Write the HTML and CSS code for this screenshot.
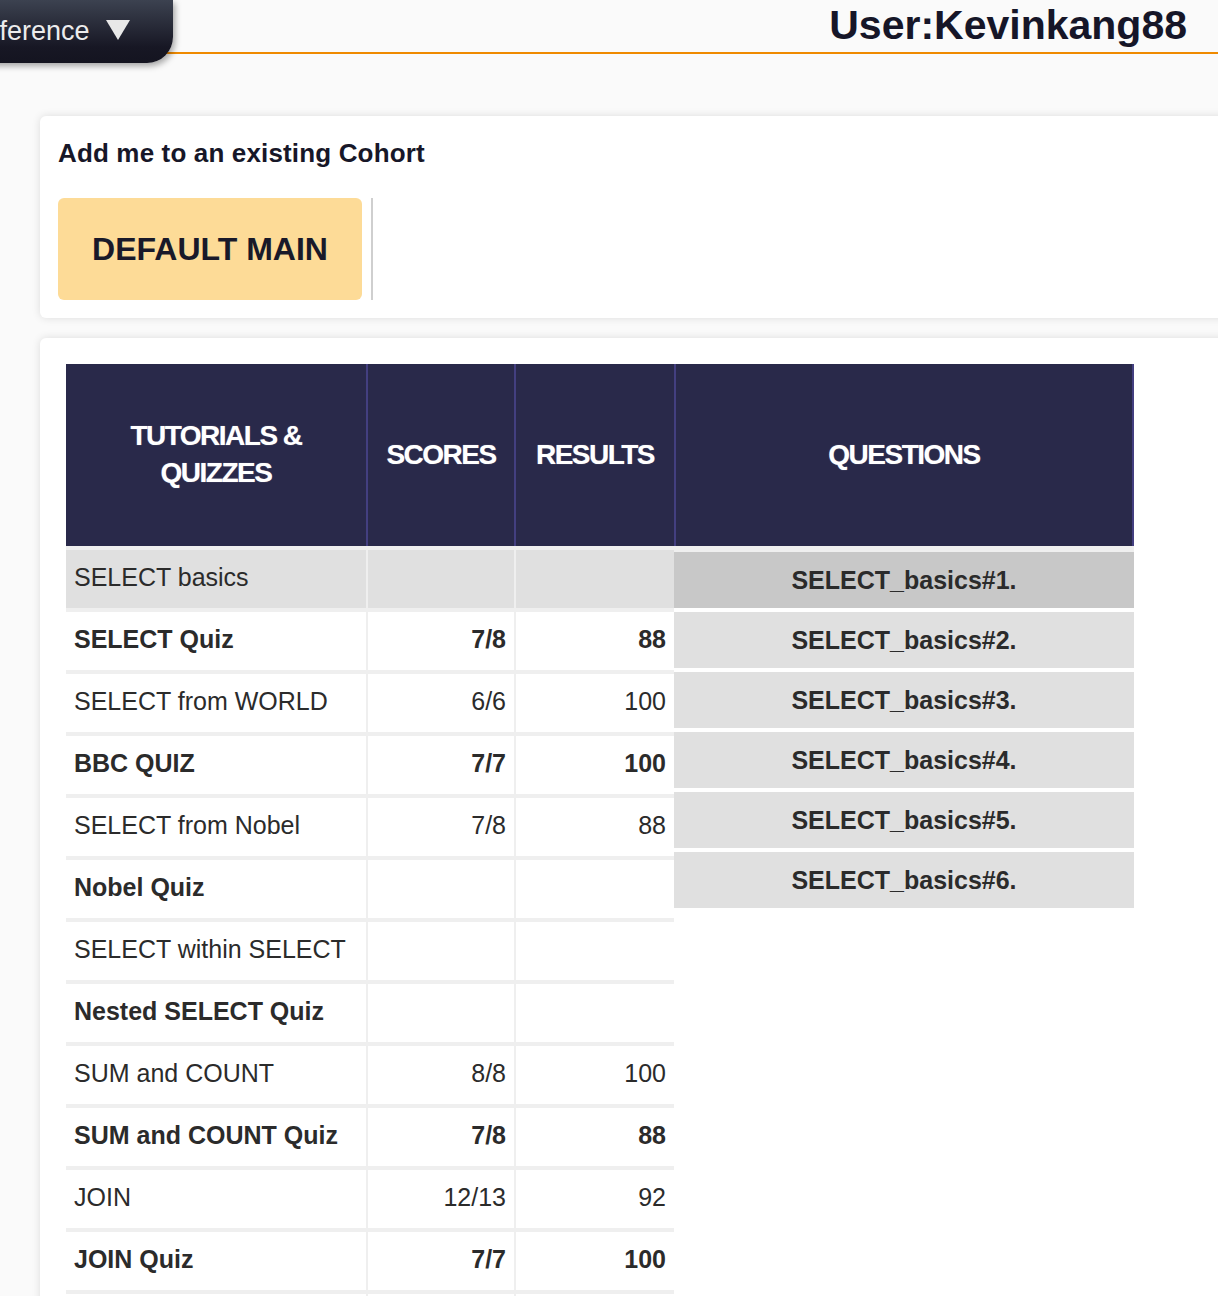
FILE: index.html
```html
<!DOCTYPE html>
<html lang="en">
<head>
<meta charset="utf-8">
<title>Progress</title>
<link rel="stylesheet" href="styles.css">
</head>
<body>
<header class="topbar">
  <div class="ref-tab">
    <span class="ref-label">Reference</span>
    <svg class="ref-caret" width="24" height="20" viewBox="0 0 24 20"><polygon points="0,0 24,0 12,20" fill="#e8e8e8"/></svg>
  </div>
  <div class="user">User:Kevinkang88</div>
</header>

<section class="card cohort">
  <h2 class="cohort-title">Add me to an existing Cohort</h2>
  <div class="cohort-row">
    <button class="cohort-btn">DEFAULT MAIN</button>
    <span class="cohort-sep"></span>
  </div>
</section>

<section class="card progress">
  <table class="grid">
    <thead>
      <tr>
        <th class="c-name">TUTORIALS &amp;<br>QUIZZES</th>
        <th class="c-score">SCORES</th>
        <th class="c-res">RESULTS</th>
        <th class="c-q">QUESTIONS</th>
      </tr>
    </thead>
    <tbody>
      <tr class="current">
        <td class="name">SELECT basics</td><td class="num"></td><td class="num"></td>
        <td class="questions" rowspan="13">
          <div class="q active">SELECT_basics#1.</div>
          <div class="q">SELECT_basics#2.</div>
          <div class="q">SELECT_basics#3.</div>
          <div class="q">SELECT_basics#4.</div>
          <div class="q">SELECT_basics#5.</div>
          <div class="q">SELECT_basics#6.</div>
        </td>
      </tr>
      <tr class="quiz"><td class="name">SELECT Quiz</td><td class="num">7/8</td><td class="num">88</td></tr>
      <tr><td class="name">SELECT from WORLD</td><td class="num">6/6</td><td class="num">100</td></tr>
      <tr class="quiz"><td class="name">BBC QUIZ</td><td class="num">7/7</td><td class="num">100</td></tr>
      <tr><td class="name">SELECT from Nobel</td><td class="num">7/8</td><td class="num">88</td></tr>
      <tr class="quiz"><td class="name">Nobel Quiz</td><td class="num"></td><td class="num"></td></tr>
      <tr><td class="name">SELECT within SELECT</td><td class="num"></td><td class="num"></td></tr>
      <tr class="quiz"><td class="name">Nested SELECT Quiz</td><td class="num"></td><td class="num"></td></tr>
      <tr><td class="name">SUM and COUNT</td><td class="num">8/8</td><td class="num">100</td></tr>
      <tr class="quiz"><td class="name">SUM and COUNT Quiz</td><td class="num">7/8</td><td class="num">88</td></tr>
      <tr><td class="name">JOIN</td><td class="num">12/13</td><td class="num">92</td></tr>
      <tr class="quiz"><td class="name">JOIN Quiz</td><td class="num">7/7</td><td class="num">100</td></tr>
      <tr><td class="name"></td><td class="num"></td><td class="num"></td></tr>
    </tbody>
  </table>
</section>
</body>
</html>
```

FILE: styles.css
```css
* { box-sizing: border-box; }

html, body {
  margin: 0;
  padding: 0;
  background: #fafafa;
  font-family: "Liberation Sans", Arial, Helvetica, sans-serif;
  color: #2b2b2b;
  overflow-x: hidden;
}

.topbar {
  display: flex;
  justify-content: space-between;
  align-items: flex-start;
  height: 54px;
  border-bottom: 2px solid #ef8a00;
}

.ref-tab {
  display: flex;
  align-items: center;
  height: 63px;
  margin-left: -62px;
  padding: 0 43px 0 27px;
  background: linear-gradient(#3c4250, #171724 75%, #141420);
  border-bottom-right-radius: 26px;
  box-shadow: 2px 3px 6px rgba(0, 0, 0, 0.35);
  color: #ececec;
  font-size: 27px;
  position: relative;
  z-index: 2;
}

.ref-caret {
  margin-left: 16px;
  margin-top: -3px;
}

.user {
  font-size: 41px;
  font-weight: bold;
  line-height: 41px;
  padding-top: 5px;
  padding-right: 31px;
  color: #161628;
}

.card {
  background: #fff;
  margin-left: 40px;
  margin-right: -30px;
  border-radius: 6px;
  box-shadow: 0 0 9px rgba(0, 0, 0, 0.12);
}

.cohort {
  margin-top: 62px;
  padding: 22px 18px 18px;
}

.cohort-title {
  margin: 0;
  font-size: 26px;
  line-height: 30px;
  font-weight: bold;
  letter-spacing: 0.15px;
  color: #171728;
}

.cohort-row {
  display: flex;
  margin-top: 30px;
}

.cohort-btn {
  width: 304px;
  height: 102px;
  border: none;
  border-radius: 6px;
  background: #fddb97;
  font-family: inherit;
  font-size: 32px;
  font-weight: bold;
  color: #191929;
  padding: 0;
}

.cohort-sep {
  width: 2px;
  margin-left: 9px;
  background: #cfcfcf;
}

.progress {
  margin-top: 20px;
  padding: 26px 0 0 26px;
  min-height: 1000px;
}

.grid {
  border-collapse: separate;
  border-spacing: 0;
  table-layout: fixed;
  width: 1068px;
}

.grid th {
  height: 182px;
  background: #29294a;
  color: #fff;
  font-size: 28px;
  line-height: 37px;
  letter-spacing: -1.5px;
  font-weight: bold;
  text-align: center;
  vertical-align: middle;
  padding: 0 8px 2px;
  text-shadow: 0 0 1px rgba(255, 255, 255, 0.5);
}

.grid th + th { border-left: 2px solid #433f80; }
.grid th.c-q { border-right: 2px solid #433f80; }

.c-name { width: 300px; }
.c-score { width: 148px; }
.c-res { width: 160px; }
.c-q { width: 460px; }

.grid tbody tr { height: 62px; }

.grid td {
  border-top: 4px solid #efefef;
  font-size: 25px;
  vertical-align: middle;
  padding: 0 8px 4px 8px;
  white-space: nowrap;
  color: #2b2b2b;
}

.grid td.num {
  text-align: right;
  border-left: 2px solid #efefef;
}

.grid tr.quiz td { font-weight: bold; }

.grid tr.current td.name,
.grid tr.current td.num { background: #e0e0e0; }

.grid td.questions {
  vertical-align: top;
  padding: 0;
  border-top: 6px solid #efefef;
  background: #fff;
}

.q {
  height: 56px;
  margin-bottom: 4px;
  display: flex;
  align-items: center;
  justify-content: center;
  background: #e0e0e0;
  font-weight: bold;
  font-size: 25px;
  color: #2b2b2b;
}

.q.active { background: #c8c8c8; }
```
